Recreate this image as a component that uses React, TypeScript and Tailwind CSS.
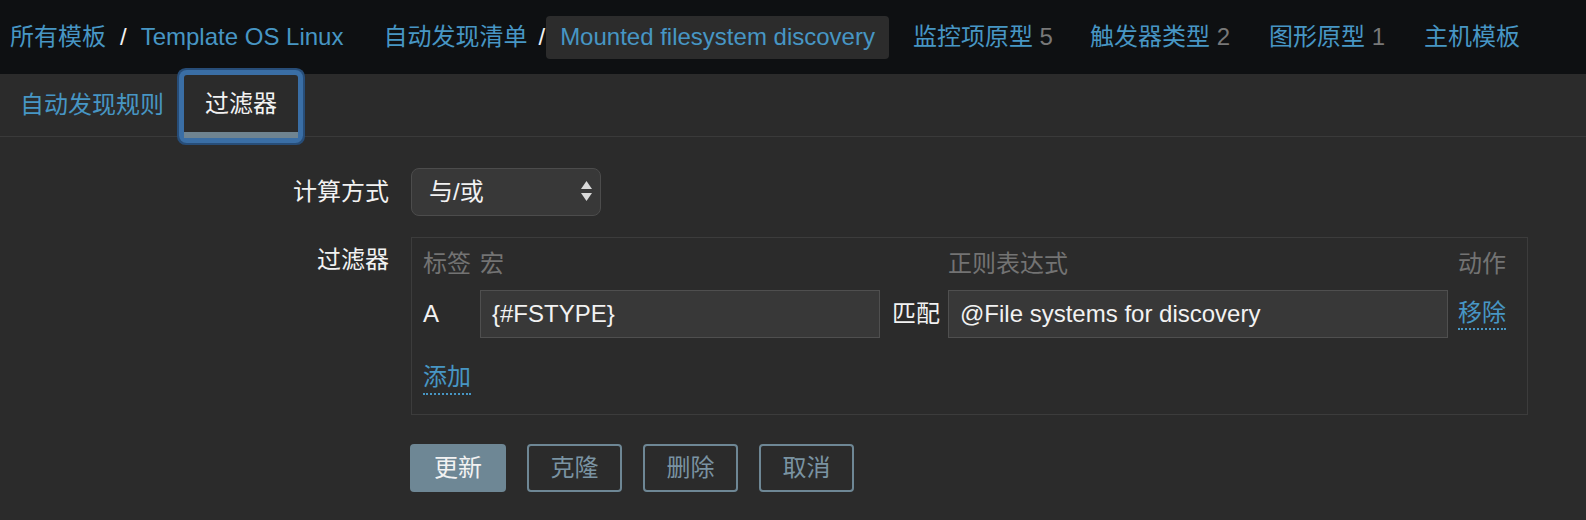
import React from 'react';

const FONT = '"Liberation Sans", "Noto Sans CJK SC", sans-serif';

function Crumb({ children }: { children: React.ReactNode }) {
    return <span className="text-[#4796c4]">{children}</span>;
}

function Counted({ label, count, className }: { label: string; count?: number; className: string }) {
    return (
        <span className={className}>
            <span className="text-[#4796c4]">{label}</span>
            {count !== undefined && <span className="text-[#787878]"> {count}</span>}
        </span>
    );
}

function SelectArrows() {
    return (
        <svg width="11" height="22" viewBox="0 0 11 22" className="text-[#d9d9d9]">
            <path d="M5.5 0 L11 8 L0 8 Z" fill="currentColor" />
            <path d="M0 12 L11 12 L5.5 20 Z" fill="currentColor" />
        </svg>
    );
}

export default function App() {
    return (
        <div className="w-[1586px] h-[520px] bg-[#2b2b2b] text-[24px] text-[#f2f2f2] overflow-hidden" style={{ fontFamily: FONT }}>
            {/* breadcrumbs */}
            <div className="h-[74px] bg-[#0e1012] flex items-center pl-[10px] whitespace-nowrap leading-[32px]">
                <Crumb>所有模板</Crumb>
                <span className="mx-[14px] text-[#f2f2f2]">/</span>
                <Crumb>Template OS Linux</Crumb>
                <span className="ml-[40px]"><Crumb>自动发现清单</Crumb></span>
                <span className="ml-[11px] mr-[1px] text-[#f2f2f2]">/</span>
                <span className="h-[43px] px-[14px] flex items-center rounded-[4px] bg-[#2c2c2c] text-[#4796c4]">Mounted filesystem discovery</span>
                <Counted className="ml-[24px]" label="监控项原型" count={5} />
                <Counted className="ml-[37px]" label="触发器类型" count={2} />
                <Counted className="ml-[39px]" label="图形原型" count={1} />
                <Counted className="ml-[39px]" label="主机模板" />
            </div>

            {/* tabs */}
            <div className="h-[62px] flex items-start whitespace-nowrap leading-[32px]">
                <span className="ml-[20px] mt-[15px] text-[#4796c4]">自动发现规则</span>
                <div className="relative z-10 ml-[20px] mt-[1px] w-[114px] h-[63px] flex flex-col rounded-[3px] bg-[#2b2b2b] shadow-[0_0_0_5px_#3a6ea5,0_0_0_7px_#274d78]">
                    <div className="flex-1 flex items-center justify-center text-[#f2f2f2]">过滤器</div>
                    <div className="h-[6px] bg-[#6f8491]" />
                </div>
            </div>
            <div className="h-px bg-[#3a3a3a]" />

            {/* form */}
            <div className="pt-[31px] leading-[32px]">
                <div className="flex items-center gap-[22px]">
                    <div className="w-[389px] text-right">计算方式</div>
                    <div className="w-[190px] h-[48px] rounded-[8px] bg-[#383838] border border-[#4c4c4c] flex items-center justify-between pl-[17px] pr-[8px]">
                        <span>与/或</span>
                        <SelectArrows />
                    </div>
                </div>

                <div className="flex items-start gap-[22px] mt-[21px]">
                    <div className="w-[389px] text-right pt-[7px]">过滤器</div>
                    <div className="w-[1117px] border border-[#3c3c3c] pl-[11px] pt-[10px] pb-[19px]">
                        <div className="flex text-[#737373]">
                            <div className="w-[57px]">标签</div>
                            <div className="w-[468px]">宏</div>
                            <div className="w-[510px]">正则表达式</div>
                            <div>动作</div>
                        </div>
                        <div className="flex items-center mt-[10px]">
                            <div className="w-[57px]">A</div>
                            <div className="w-[400px] h-[48px] bg-[#383838] border border-[#4f4f4f] flex items-center px-[11px]">{'{#FSTYPE}'}</div>
                            <div className="w-[68px] pl-[12px]">匹配</div>
                            <div className="w-[500px] h-[48px] bg-[#383838] border border-[#4f4f4f] flex items-center px-[11px]">@File systems for discovery</div>
                            <div className="ml-[10px] text-[#4796c4] border-b-2 border-dotted border-[#4796c4] leading-[30px]">移除</div>
                        </div>
                        <div className="mt-[23px] flex">
                            <span className="text-[#4796c4] border-b-2 border-dotted border-[#4796c4]">添加</span>
                        </div>
                    </div>
                </div>

                <div className="flex gap-[21px] mt-[29px] ml-[410px]">
                    <button className="w-[96px] h-[48px] rounded-[4px] bg-[#6e8795] text-[#f2f2f2]">更新</button>
                    <button className="w-[95px] h-[48px] rounded-[4px] border-2 border-[#6e8795] text-[#7a93a2]">克隆</button>
                    <button className="w-[95px] h-[48px] rounded-[4px] border-2 border-[#6e8795] text-[#7a93a2]">删除</button>
                    <button className="w-[95px] h-[48px] rounded-[4px] border-2 border-[#6e8795] text-[#7a93a2]">取消</button>
                </div>
            </div>
        </div>
    );
}
